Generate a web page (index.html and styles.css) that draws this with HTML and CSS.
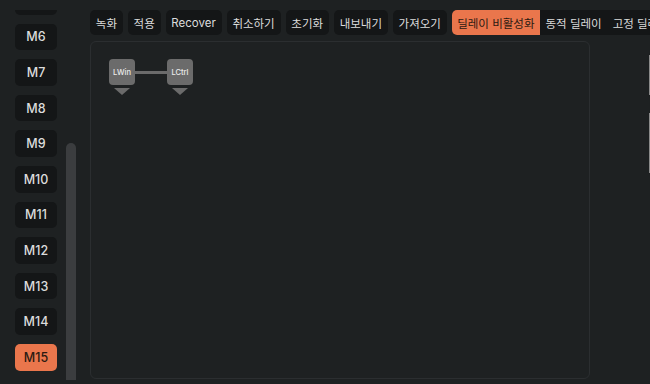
FILE: index.html
```html
<!DOCTYPE html>
<html lang="ko">
<head>
  <meta charset="UTF-8" />
  <title>매크로 편집</title>
  <meta name="viewport" content="width=device-width, initial-scale=1" />
  <link rel="stylesheet" href="styles.css">
</head>
<body>
  <div class="app">
    <aside class="sidebar">
      <div class="list-wrap">
        <div class="macro-list">
          <button class="macro">M5</button>
          <button class="macro">M6</button>
          <button class="macro">M7</button>
          <button class="macro">M8</button>
          <button class="macro">M9</button>
          <button class="macro">M10</button>
          <button class="macro">M11</button>
          <button class="macro">M12</button>
          <button class="macro">M13</button>
          <button class="macro">M14</button>
          <button class="macro active">M15</button>
        </div>
      </div>
      <div class="scroll-track"><div class="scroll-thumb"></div></div>
    </aside>

    <main class="main">
      <div class="toolbar">
        <button class="tool">녹화</button>
        <button class="tool">적용</button>
        <button class="tool">Recover</button>
        <button class="tool">취소하기</button>
        <button class="tool">초기화</button>
        <button class="tool">내보내기</button>
        <button class="tool">가져오기</button>
        <div class="segment">
          <button class="seg active">딜레이 비활성화</button>
          <button class="seg">동적 딜레이</button>
          <button class="seg">고정 딜레이</button>
        </div>
      </div>

      <div class="row">
        <section class="canvas">
          <div class="chain">
            <div class="key">
              <div class="key-cap">LWin</div>
              <div class="key-arrow"></div>
            </div>
            <div class="link"></div>
            <div class="key">
              <div class="key-cap">LCtrl</div>
              <div class="key-arrow"></div>
            </div>
          </div>
        </section>
        <div class="side-edge">
          <div class="edge-bar one"></div>
          <div class="edge-bar two"></div>
        </div>
      </div>
    </main>
  </div>
</body>
</html>
```

FILE: styles.css
```css
* {
  box-sizing: border-box;
  font-family: Inter, 'Noto Sans CJK KR', sans-serif;
}
body {
  margin: 0;
  background: #1e2122;
  color: #e2e2e2;
  width: 650px;
  height: 384px;
  overflow: hidden;
}
button {
  border: none;
  font-family: inherit;
  cursor: pointer;
}
.app {
  display: flex;
  height: 384px;
}

/* sidebar */
.sidebar {
  width: 90px;
  flex-shrink: 0;
  display: flex;
  overflow: hidden;
}
.list-wrap {
  margin-top: 10px;
  margin-left: 15px;
  overflow: hidden;
}
.macro-list {
  margin-top: -22px;
  display: flex;
  flex-direction: column;
  gap: 9px;
}
.macro {
  width: 42px;
  height: 26.6px;
  flex-shrink: 0;
  border-radius: 5px;
  background: #141617;
  color: #dcdcdc;
  font-size: 12.5px;
  font-weight: 500;
  padding: 0;
}
.macro.active {
  background: #ea764c;
  color: #2b1a12;
}
.scroll-track {
  margin-left: 9px;
  width: 10px;
  padding-top: 143px;
  padding-bottom: 4px;
}
.scroll-thumb {
  height: 100%;
  background: #3b3d3f;
  border-radius: 5px 5px 0 0;
}

/* main */
.main {
  flex: 1;
  min-width: 0;
  display: flex;
  flex-direction: column;
  padding-top: 10px;
}
.toolbar {
  display: flex;
  gap: 5px;
  height: 25px;
  white-space: nowrap;
  overflow: hidden;
}
.tool {
  flex-shrink: 0;
  height: 25px;
  padding: 0 5.8px;
  border-radius: 5px;
  background: #141617;
  color: #dcdcdc;
  font-size: 11.5px;
  font-weight: 400;
}
.segment {
  display: flex;
  flex-shrink: 0;
  background: #141617;
  border-radius: 5px 0 0 5px;
}
.seg {
  height: 25px;
  padding: 0 5.5px;
  background: transparent;
  color: #dcdcdc;
  font-size: 11.5px;
  font-weight: 400;
}
.seg.active {
  background: #ea764c;
  color: #2b1a12;
  border-radius: 5px 0 0 5px;
}

.row {
  flex: 1;
  display: flex;
  margin-top: 6px;
  margin-bottom: 5px;
}
.canvas {
  width: 500px;
  border: 1px solid #2b2e30;
  border-radius: 6px;
  padding: 17px 0 0 18px;
}
.side-edge {
  flex: 1;
  position: relative;
}
.edge-bar {
  position: absolute;
  right: 0;
  width: 1px;
  background: #8a8a8a;
}
.edge-bar.one {
  top: 14px;
  height: 40px;
}
.edge-bar.two {
  top: 72px;
  height: 60px;
}

.chain {
  display: flex;
  align-items: flex-start;
}
.key {
  display: flex;
  flex-direction: column;
  align-items: center;
}
.key-cap {
  width: 26px;
  height: 26px;
  border-radius: 4px;
  background: #6b6b6b;
  color: #ececec;
  font-size: 7.5px;
  font-weight: 500;
  display: flex;
  align-items: center;
  justify-content: center;
}
.key-arrow {
  margin-top: 3px;
  width: 0;
  height: 0;
  border-left: 8px solid transparent;
  border-right: 8px solid transparent;
  border-top: 7px solid #6b6b6b;
}
.link {
  width: 32px;
  height: 3px;
  margin-top: 12px;
  background: #6b6b6b;
}
```
